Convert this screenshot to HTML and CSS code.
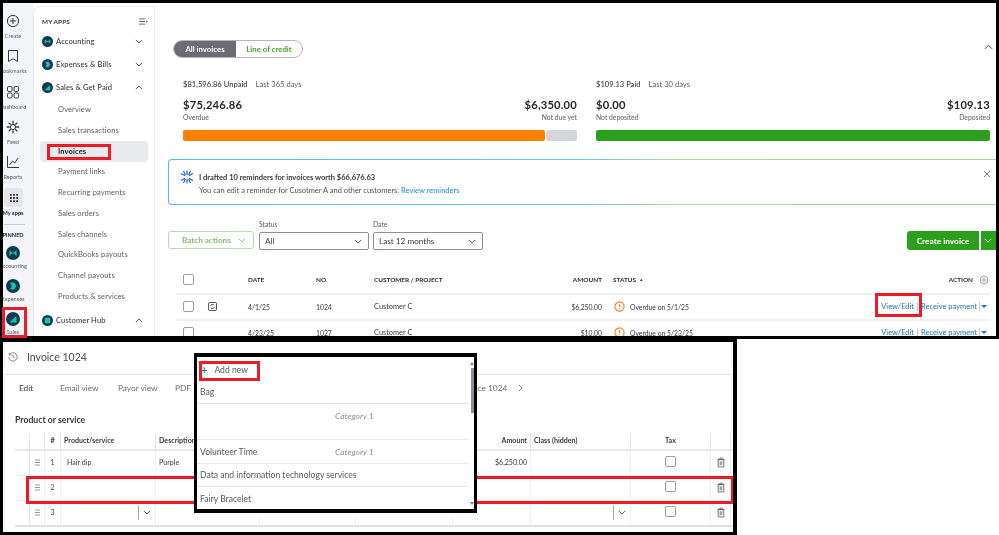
FILE: index.html
```html
<!DOCTYPE html>
<html lang="en">
<head>
<meta charset="utf-8">
<title>Invoices</title>
<link rel="stylesheet" href="styles.css">
</head>
<body>
<svg class="defs" width="0" height="0" aria-hidden="true">
  <symbol id="chev-down" viewBox="0 0 10 6"><path d="M1 1l4 4 4-4" fill="none" stroke="currentColor" stroke-width="1.1"/></symbol>
  <symbol id="chev-up" viewBox="0 0 10 6"><path d="M1 5l4-4 4 4" fill="none" stroke="currentColor" stroke-width="1.1"/></symbol>
  <symbol id="trash" viewBox="0 0 10 13"><path d="M1.5 3h7v9h-7zM.5 2.6h9M3.5 2.4V1h3v1.4M4 5v5M6 5v5" fill="none" stroke="#55585e" stroke-width="1"/></symbol>
  <symbol id="grip" viewBox="0 0 6 8"><path d="M0 1h6M0 4h6M0 7h6" stroke="#8d9096" stroke-width="1.1"/></symbol>
  <symbol id="alert" viewBox="0 0 12 12"><circle cx="6" cy="6" r="5" fill="#fff" stroke="#f58220" stroke-width="1.2"/><path d="M6 3v3.6M6 8v1" stroke="#f58220" stroke-width="1.2"/></symbol>
</svg>
<div class="page">

<section class="shot shot-top">
  <aside class="rail">
    <div class="rail-group">
      <div class="rail-item"><svg class="rail-icon" viewBox="0 0 14 14"><circle cx="7" cy="7" r="5.6" fill="none" stroke="#393a3d"/><path d="M7 4v6M4 7h6" stroke="#393a3d"/></svg><span>Create</span></div>
      <div class="rail-item"><svg class="rail-icon" viewBox="0 0 14 14"><path d="M2.5 1.500h9v11L7 9.600l-4.500 2.900z" fill="none" stroke="#393a3d"/></svg><span>Bookmarks</span></div>
      <div class="rail-item"><svg class="rail-icon" viewBox="0 0 14 14"><rect x="1.5" y="1.5" width="4.6" height="5" rx="1.3" fill="none" stroke="#393a3d"/><rect x="8" y="1.5" width="4.6" height="5" rx="1.3" fill="none" stroke="#393a3d"/><rect x="1.5" y="8" width="4.6" height="5" rx="1.3" fill="none" stroke="#393a3d"/><rect x="8" y="8" width="4.6" height="5" rx="1.3" fill="none" stroke="#393a3d"/></svg><span>Dashboard</span></div>
      <div class="rail-item"><svg class="rail-icon" viewBox="0 0 14 14"><circle cx="7" cy="7" r="2.6" fill="none" stroke="#393a3d"/><path d="M7 .8v3M7 10.200v3M.8 7h3M10.200 7h3M2.600 2.600l2.200 2.200M9.200 9.200l2.200 2.200M11.400 2.600L9.200 4.800M4.800 9.200l-2.200 2.200" stroke="#393a3d" stroke-width="1.3"/></svg><span>Feed</span></div>
      <div class="rail-item"><svg class="rail-icon" viewBox="0 0 14 14"><path d="M1.500 1v11.500H13" fill="none" stroke="#393a3d"/><path d="M3.500 10l3-4 2.200 2L12 3" fill="none" stroke="#393a3d"/></svg><span>Reports</span></div>
    </div>
    <div class="rail-apps">
      <div class="apps-box"><svg class="apps-dots" viewBox="0 0 10 10"><path d="M1 1h1.800v1.800H1zM4.100 1h1.800v1.800H4.100zM7.200 1H9v1.800H7.200zM1 4.100h1.800v1.800H1zM4.100 4.100h1.800v1.800H4.100zM7.200 4.100H9v1.800H7.200zM1 7.200h1.800V9H1zM4.100 7.200h1.800V9H4.100zM7.200 7.200H9V9H7.200z" fill="#2f3033"/></svg></div>
      <span class="strong-label">My apps</span>
    </div>
    <div class="rail-rule"></div>
    <span class="strong-label pinned">PINNED</span>
    <div class="rail-pins">
      <div class="rail-item"><svg class="rail-icon" viewBox="0 0 12 12"><circle cx="6" cy="6" r="6" fill="#0d3a55"/><path d="M3 3.500l2 2h2l2-2v5l-2-2H5l-2 2z" fill="#18c9a0"/></svg><span>Accounting</span></div>
      <div class="rail-item"><svg class="rail-icon" viewBox="0 0 12 12"><circle cx="6" cy="6" r="6" fill="#0d3a55"/><path d="M3.500 3H7l2 3-2 3H3.500l1.500-3z" fill="#18c9a0"/></svg><span>Expenses</span></div>
      <div class="rail-item"><svg class="rail-icon" viewBox="0 0 12 12"><circle cx="6" cy="6" r="6" fill="#0d3a55"/><path d="M3 9l5-5 1 0v5z" fill="#18c9a0"/></svg><span>Sales</span></div>
    </div>
  </aside>

  <nav class="nav">
    <div class="nav-head"><span>MY APPS</span><svg class="nav-collapse" viewBox="0 0 10 8"><path d="M0 1h7M0 4h7M0 7h7" stroke="#55585e"/><path d="M8 2.500L10 4 8 5.500z" fill="#55585e"/></svg></div>
    <div class="app-row"><svg class="app-icon" viewBox="0 0 12 12"><circle cx="6" cy="6" r="6" fill="#0d3a55"/><path d="M3 3.500l2 2h2l2-2v5l-2-2H5l-2 2z" fill="#18c9a0"/></svg><span class="app-name">Accounting</span><svg class="chev" viewBox="0 0 10 6"><use href="#chev-down"/></svg></div>
    <div class="app-row"><svg class="app-icon" viewBox="0 0 12 12"><circle cx="6" cy="6" r="6" fill="#0d3a55"/><path d="M3.500 3H7l2 3-2 3H3.500l1.500-3z" fill="#18c9a0"/></svg><span class="app-name">Expenses &amp; Bills</span><svg class="chev" viewBox="0 0 10 6"><use href="#chev-down"/></svg></div>
    <div class="app-row app-row-open"><svg class="app-icon" viewBox="0 0 12 12"><circle cx="6" cy="6" r="6" fill="#0d3a55"/><path d="M3 9l5-5 1 0v5z" fill="#18c9a0"/></svg><span class="app-name">Sales &amp; Get Paid</span><svg class="chev" viewBox="0 0 10 6"><use href="#chev-up"/></svg></div>
    <a class="sub-item">Overview</a>
    <a class="sub-item">Sales transactions</a>
    <a class="sub-item is-active">Invoices</a>
    <a class="sub-item">Payment links</a>
    <a class="sub-item">Recurring payments</a>
    <a class="sub-item">Sales orders</a>
    <a class="sub-item">Sales channels</a>
    <a class="sub-item">QuickBooks payouts</a>
    <a class="sub-item">Channel payouts</a>
    <a class="sub-item">Products &amp; services</a>
    <div class="app-row app-row-hub"><svg class="app-icon" viewBox="0 0 12 12"><circle cx="6" cy="6" r="6" fill="#0d3a55"/><rect x="3" y="3" width="6" height="6" rx="1" fill="#18c9a0"/></svg><span class="app-name">Customer Hub</span><svg class="chev" viewBox="0 0 10 6"><use href="#chev-up"/></svg></div>
  </nav>

  <main class="main">
    <div class="tabs-row">
      <div class="seg"><span class="seg-on">All invoices</span><span class="seg-off">Line of credit</span></div>
      <svg class="collapse-up" viewBox="0 0 10 6"><use href="#chev-up"/></svg>
    </div>
    <div class="stats">
      <div class="stat">
        <div class="stat-head"><span>$81,596.86 Unpaid</span><span class="stat-range">Last 365 days</span></div>
        <div class="stat-line"><b>$75,246.86</b><b>$6,350.00</b></div>
        <div class="stat-cap"><span>Overdue</span><span>Not due yet</span></div>
        <div class="bar"><i class="bar-orange"></i><i class="bar-grey"></i></div>
      </div>
      <div class="stat">
        <div class="stat-head"><span>$109.13 Paid</span><span class="stat-range">Last 30 days</span></div>
        <div class="stat-line"><b>$0.00</b><b>$109.13</b></div>
        <div class="stat-cap"><span>Not deposited</span><span>Deposited</span></div>
        <div class="bar"><i class="bar-green"></i></div>
      </div>
    </div>
    <div class="banner">
      <svg class="banner-icon" viewBox="0 0 14 14"><path d="M7 .5v4.500M7 9v4.500M1 3.500l4 2.300M9 8.200l4 2.300M13 3.500L9 5.800M5 8.200l-4 2.300M3.500 1L5.500 5M8.500 9l2 4M10.500 1l-2 4M5.500 9l-2 4" stroke="#1e64e0" stroke-width="1.200" fill="none"/></svg>
      <div class="banner-text">
        <b>I drafted 10 reminders for invoices worth $66,676.63</b>
        <p>You can edit a reminder for Cusotmer A and other customers. <a>Review reminders</a></p>
      </div>
      <svg class="banner-x" viewBox="0 0 8 8"><path d="M1 1l6 6M7 1L1 7" stroke="#7d8086"/></svg>
    </div>
    <div class="filters">
      <button class="batch">Batch actions<svg class="chev-sm" viewBox="0 0 10 6"><use href="#chev-down"/></svg></button>
      <label class="field"><span>Status</span><div class="select"><span>All</span><svg class="chev-sm" viewBox="0 0 10 6"><use href="#chev-down"/></svg></div></label>
      <label class="field"><span>Date</span><div class="select"><span>Last 12 months</span><svg class="chev-sm" viewBox="0 0 10 6"><use href="#chev-down"/></svg></div></label>
      <div class="create"><button class="create-main">Create invoice</button><button class="create-split"><svg class="chev-sm" viewBox="0 0 10 6"><use href="#chev-down"/></svg></button></div>
    </div>
    <div class="inv-table">
      <div class="inv-row inv-head">
        <span class="box"></span><span></span><span>DATE</span><span>NO.</span><span>CUSTOMER / PROJECT</span><span class="right">AMOUNT</span><span class="inv-status">STATUS <small>▲</small></span>
        <span class="inv-action">ACTION<svg class="gear" viewBox="0 0 12 12"><path d="M6 1l4.300 2.500v5L6 11 1.700 8.500v-5z" fill="none" stroke="#85888e"/><circle cx="6" cy="6" r="1.700" fill="none" stroke="#85888e"/></svg></span>
      </div>
      <div class="inv-row">
        <span class="box"></span><svg class="sync" viewBox="0 0 10 10"><rect x=".5" y=".5" width="9" height="9" rx="1.500" fill="none" stroke="#393a3d"/><path d="M2.800 4.500a2.300 2.300 0 0 1 4-1M7.200 5.500a2.300 2.300 0 0 1-4 1" fill="none" stroke="#393a3d" stroke-width=".9"/></svg><span>4/1/25</span><span>1024</span><span class="inv-cust">Customer C</span><span class="right">$6,250.00</span>
        <span class="inv-status"><svg class="alert"><use href="#alert"/></svg>Overdue on 5/1/25</span>
        <span class="inv-links"><a>View/Edit</a><a class="linked">Receive payment</a><i class="caret"></i></span>
      </div>
      <div class="inv-row">
        <span class="box"></span><span></span><span>4/23/25</span><span>1027</span><span class="inv-cust">Customer C</span><span class="right">$10.00</span>
        <span class="inv-status"><svg class="alert"><use href="#alert"/></svg>Overdue on 5/23/25</span>
        <span class="inv-links"><a>View/Edit</a><a class="linked">Receive payment</a><i class="caret"></i></span>
      </div>
    </div>
  </main>
  <div class="mark mark-invoices"></div>
  <div class="mark mark-view"></div>
</section>
<div class="mark mark-sales"></div>

<section class="shot shot-bottom">
  <header class="inv-title">
    <svg class="history" viewBox="0 0 12 12"><path d="M1.800 3.200A5 5 0 1 1 1 6M1.500 1v2.500H4M6 3.200V6l2 1.200" fill="none" stroke="#6b6c72"/></svg>
    <span>Invoice 1024</span>
  </header>
  <div class="inv-tabs">
    <span class="tab-edit">Edit</span><span class="tab-email">Email view</span><span class="tab-payor">Payor view</span><span class="tab-pdf">PDF<svg class="tab-pdf-chev" viewBox="0 0 10 6"><use href="#chev-down"/></svg></span><span class="tab-doc">Invoice 1024</span>
    <svg class="tab-next" viewBox="0 0 6 10"><path d="M1 1l4 4-4 4" fill="none" stroke="#6b6c72" stroke-width="1.100"/></svg>
  </div>
  <h2 class="ps-title">Product or service</h2>
  <div class="ps-table">
    <div class="ps-row ps-head">
      <span></span><span></span><span class="center">#</span><span>Product/service</span><span>Description</span><span></span><span></span><span class="right">Amount</span><span>Class (hidden)</span><span class="center">Tax</span><span></span>
    </div>
    <div class="ps-row">
      <span></span><span class="center"><svg class="grip"><use href="#grip"/></svg></span><span class="center">1</span><span class="ps-indent">Hair dip</span><span>Purple</span><span></span><span></span><span class="right">$6,250.00</span><span></span><span class="center"><i class="box"></i></span><span class="center"><svg class="trash"><use href="#trash"/></svg></span>
    </div>
    <div class="ps-row">
      <span></span><span class="center"><svg class="grip"><use href="#grip"/></svg></span><span class="center">2</span><span></span><span></span><span></span><span></span><span></span><span></span><span class="center"><i class="box"></i></span><span class="center"><svg class="trash"><use href="#trash"/></svg></span>
    </div>
    <div class="ps-row ps-last">
      <span></span><span class="center"><svg class="grip"><use href="#grip"/></svg></span><span class="center">3</span><span class="ps-pick"><svg class="chev-pick" viewBox="0 0 10 6"><use href="#chev-down"/></svg></span><span></span><span></span><span></span><span></span><span class="ps-pick"><svg class="chev-pick" viewBox="0 0 10 6"><use href="#chev-down"/></svg></span><span class="center"><i class="box"></i></span><span class="center"><svg class="trash"><use href="#trash"/></svg></span>
    </div>
  </div>
  <div class="mark mark-line"></div>
</section>

<aside class="popup">
  <div class="popup-list">
    <div class="pop-add"><span class="plus">+</span><span>Add new</span></div>
    <div class="pop-item pop-bag">Bag</div>
    <div class="pop-item pop-cat"><em>Category 1</em></div>
    <div class="pop-item pop-vol"><span class="pop-name">Volunteer Time</span><em>Category 1</em></div>
    <div class="pop-item pop-data">Data and information technology services</div>
    <div class="pop-item pop-last">Fairy Bracelet</div>
  </div>
  <div class="scroll"><i class="arrow-up"></i><i class="thumb"></i><i class="arrow-down"></i></div>
  <div class="mark mark-add"></div>
</aside>

</div>
</body>
</html>
```

FILE: styles.css
```css
* { box-sizing: border-box; }
html, body { margin: 0; padding: 0; background: #fff; }
body { width: 999px; height: 535px; overflow: hidden; font-family: Lato, "Noto Sans", sans-serif; color: #393a3d; font-size: 7.5px; }
.defs { position: absolute; }
.page { position: relative; width: 999px; height: 535px; filter: blur(.45px); }
svg { display: block; flex: none; }
b { font-weight: 700; }

.shot { position: absolute; border: 3px solid #000; background: #fff; overflow: hidden; }
.shot-top { left: 0; top: 0; width: 999px; height: 339px; display: flex; }
.shot-bottom { left: 0; top: 339px; width: 737px; height: 196px; border-width: 3px 4px 3px 3px; }

.mark { position: absolute; border: 3px solid #ed1c24; pointer-events: none; }
.mark-sales { left: 2px; top: 307px; width: 25px; height: 31px; }
.mark-invoices { left: 44px; top: 141px; width: 64px; height: 16px; }
.mark-view { left: 872px; top: 290px; width: 47px; height: 24px; }
.mark-line { left: 23px; top: 134px; width: 708px; height: 28px; }
.mark-add { left: 2px; top: 4px; width: 61px; height: 20px; }

/* rail */
.rail { width: 30px; flex: none; background: #f4f5f8; padding: 11px 0 0 0; display: flex; flex-direction: column; color: #5b5e64; font-size: 5.6px; }
.rail-group, .rail-pins { width: 20px; display: flex; flex-direction: column; align-items: center; gap: 11.25px; }
.rail-pins { gap: 9px; margin-top: 5.5px; }
.rail-item { display: flex; flex-direction: column; align-items: center; gap: 4px; height: 24px; line-height: 7.5px; white-space: nowrap; }
.rail-pins .rail-item { gap: 2.5px; }
.rail-icon { width: 14px; height: 14px; }
.rail-apps { width: 20px; margin-top: 9px; display: flex; flex-direction: column; align-items: center; line-height: 11px; }
.apps-box { width: 19px; height: 19px; border-radius: 3px; background: #e3e5e8; display: flex; align-items: center; justify-content: center; margin-left: 1px; }
.apps-dots { width: 10px; height: 10px; }
.strong-label { color: #25262a; font-weight: 700; font-size: 5.6px; white-space: nowrap; }
.rail-rule { width: 21px; height: 1px; background: #c9ccd1; margin: 6px 0 0 1px; }
.pinned { width: 20px; display: flex; justify-content: center; line-height: 10px; margin-top: 5px; }

/* nav */
.nav { width: 122px; flex: none; margin-top: 3px; padding-top: 8.3px; background: #fff; border: 1px solid #e6e8eb; border-bottom: 0; border-radius: 8px 0 0 0; color: #5b5e64; font-size: 7.55px; letter-spacing: .1px; }
.nav-head { display: flex; justify-content: space-between; align-items: center; height: 12px; padding: 0 6px 0 8px; color: #393a3d; font-size: 6.4px; font-weight: 700; margin-bottom: 2.5px; }
.nav-collapse { width: 9px; height: 7px; }
.app-row { display: flex; align-items: center; height: 23px; padding: 0 11px 0 8px; gap: 3px; }
.app-row-open { margin-bottom: .5px; }
.app-row-hub { margin-top: 2px; }
.app-icon { width: 11px; height: 11px; }
.app-name { flex: 1; color: #393a3d; font-weight: 500; }
.chev { width: 8px; height: 5px; color: #393a3d; }
.sub-item { display: flex; align-items: center; height: 20.75px; margin: 0 6px; padding-left: 18px; border-radius: 4px; }
.is-active { background: #e9eaed; color: #26272a; font-weight: 700; }

/* main */
.main { flex: 1; min-width: 0; padding-top: 37px; }
.tabs-row { display: flex; justify-content: space-between; align-items: flex-start; margin: 0 3px 0 18px; }
.seg { display: flex; height: 18px; border: 1px solid #b5b7bc; border-radius: 9px; overflow: hidden; font-size: 7.8px; font-weight: 700; }
.seg-on { width: 62px; background: #6b6c72; color: #fff; display: flex; align-items: center; justify-content: center; }
.seg-off { width: 66px; color: #4aa32f; display: flex; align-items: center; justify-content: center; }
.collapse-up { width: 9px; height: 6px; color: #393a3d; margin-top: 4px; }

.stats { display: grid; grid-template-columns: 394px 394px; column-gap: 19px; margin: 20px 0 0 28px; }
.stat-head { display: flex; gap: 8px; height: 12px; line-height: 12px; font-size: 7.6px; font-weight: 500; }
.stat-range { color: #5b5e64; font-weight: 400; }
.stat-line { display: flex; justify-content: space-between; margin-top: 8px; height: 14px; line-height: 14px; font-size: 11.2px; letter-spacing: .2px; color: #26272a; }
.stat-cap { display: flex; justify-content: space-between; height: 10px; line-height: 10px; color: #5b5e64; font-size: 6.8px; }
.bar { display: flex; gap: 1px; height: 11px; margin-top: 8px; }
.bar i { display: block; height: 100%; border-radius: 2px; }
.bar-orange { width: 362px; background: #ff8000; }
.bar-grey { flex: 1; background: #d4d6da; }
.bar-green { width: 100%; background: #2ca01c; }

.banner { display: flex; align-items: flex-start; height: 46px; margin: 18px -8px 0 13px; padding: 10px 12px 0 11px; border: 1px solid transparent; border-radius: 4px; background: linear-gradient(#fff, #fff) padding-box, linear-gradient(90deg, #59b9ee, #6fc3e6 50%, #a6dd92 60%, #a0d98d) border-box; }
.banner-icon { width: 14px; height: 14px; margin-right: 5px; }
.banner-text { flex: 1; font-size: 7.5px; line-height: 13px; padding-top: 1px; }
.banner-text p { margin: 0; color: #4d5056; }
.banner-text a { color: #1a8cd8; }
.banner-x { width: 8px; height: 8px; }

.filters { display: flex; align-items: flex-end; height: 32px; margin: 13px 0 0 13px; gap: 5px; }
.batch { display: flex; align-items: center; justify-content: space-between; width: 86px; height: 18px; margin-bottom: 1px; padding: 0 7px 0 13px; border: 1px solid #b2dfa9; border-radius: 3px; background: #fff; color: #7fc073; font: 700 8.1px Lato, sans-serif; }
.chev-sm { width: 8px; height: 5px; }
.field { display: flex; flex-direction: column; gap: 2px; color: #5b5e64; font-size: 6.8px; line-height: 12px; margin-right: -1px; }
.select { display: flex; align-items: center; justify-content: space-between; width: 110px; height: 18px; padding: 0 6px 0 5px; border: 1px solid #8d9096; border-radius: 2px; color: #393a3d; font-size: 8.2px; }
.create { display: flex; gap: 2px; margin-left: auto; margin-bottom: 0; }
.create button { height: 19px; border: 0; background: #2ca01c; color: #fff; font: 700 8.3px Lato, sans-serif; }
.create-main { width: 72px; border-radius: 3px 0 0 3px; }
.create-split { width: 15px; padding: 0 0 0 3px; }
.create-split svg { color: #fff; }

.inv-table { margin: 17px 6px 0 21px; font-size: 6.8px; }
.inv-row { display: grid; grid-template-columns: 7px 25px 40px 68px 58px 150px 78px 1fr auto; align-items: center; height: 26px; border-bottom: 2px solid #eef0f2; }
.inv-row::before { content: ""; }
.inv-head { height: 27.5px; font-weight: 700; color: #2d2e31; font-size: 6.4px; }
.inv-cust { font-size: 7.4px; }
.box { display: block; width: 11px; height: 11px; border: 1px solid #9a9da3; border-radius: 2px; background: #fff; }
.sync { width: 9px; height: 9px; }
.right { text-align: right; }
.inv-status { display: flex; align-items: center; gap: 5px; padding-left: 11px; white-space: nowrap; }
.inv-status small { font-size: 4.5px; margin-left: -2px; }
.inv-action { display: flex; align-items: center; gap: 6px; }
.gear { width: 10px; height: 10px; margin-right: 1px; }
.alert { width: 11px; height: 11px; margin-left: 1px; }
.inv-links { display: flex; align-items: center; color: #1a72b8; font-size: 7.5px; padding-right: 3px; }
.linked { border-left: 1px solid #c6c9ce; margin-left: 3px; padding: 0 2px 0 3px; border-right: 1px solid #c6c9ce; }
.caret { width: 0; height: 0; margin-left: 1px; border: 3px solid transparent; border-top: 3px solid #1a72b8; border-bottom: 0; }

/* lower */
.inv-title { display: flex; align-items: center; gap: 9px; height: 33px; padding: 0 0 3px 5px; border-bottom: 1px solid #e3e5e8; font-size: 10.5px; color: #4a4c51; }
.history { width: 10px; height: 10px; }
.inv-tabs { display: flex; align-items: center; height: 26px; padding-left: 16px; font-size: 8.3px; color: #6b6d73; white-space: nowrap; }
.tab-edit { width: 41px; color: #393a3d; }
.tab-email { width: 58px; }
.tab-payor { width: 57px; }
.tab-pdf { width: 285px; display: flex; align-items: center; gap: 4px; }
.tab-pdf-chev { width: 7px; height: 5px; }
.tab-doc { width: 49px; margin-right: 9px; }
.tab-next { width: 5px; height: 8px; }
.ps-title { margin: 13px 0 0 12px; height: 12px; line-height: 12px; font-size: 8.7px; font-weight: 700; color: #393a3d; }
.ps-table { margin: 6px -6px 0 12px; font-size: 7.1px; }
.ps-row { display: grid; grid-template-columns: 15px 15px 16px 95px 104px 96px 97px 78px 100px 80px 20px; height: 25.200px; border-bottom: 1px solid #eceef1; }
.ps-last { height: 26.2px; border-bottom: 2px solid #dfe1e5; }
.ps-row > span { display: flex; align-items: center; border-right: 1px solid #eef0f2; min-width: 0; padding: 0 2px 0 3px; }
.ps-row > span:first-child { border-right-color: #e3e5e8; }
.ps-head { height: 18.5px; padding-top: 1px; border-bottom: 2px solid #e6e8eb; font-weight: 700; color: #393a3d; }
.ps-head > span { border-right-color: #dfe1e5; white-space: nowrap; }
.ps-row > .center { justify-content: center; padding: 0; }
.ps-row > .right { justify-content: flex-end; padding-right: 3px; }
.ps-row > .ps-indent { padding-left: 6px; }
.ps-row > .ps-pick { justify-content: flex-end; padding-right: 3px; }
.chev-pick { width: 8px; height: 5px; color: #393a3d; box-sizing: content-box; padding: 5px 0 5px 4px; border-left: 1px solid #a9acb1; margin-right: 1px; }
.grip { width: 5px; height: 7px; }
.trash { width: 8px; height: 11px; }
.ps-row .box { width: 11px; height: 11px; margin-top: -3px; }

/* popup */
.popup { position: absolute; left: 194px; top: 353px; width: 283px; height: 160px; display: flex; border: solid #000; border-width: 4px 3px; background: #fff; }
.popup-list { width: 271px; font-size: 8.6px; color: #55585e; }
.pop-add { display: flex; align-items: center; gap: 7px; height: 25px; padding-left: 4px; }
.plus { color: #1a72b8; font-size: 11px; font-weight: 700; line-height: 1; }
.pop-item { display: flex; align-items: center; padding-left: 3px; border-bottom: 1px solid #e4e6e9; }
.pop-item em { color: #8d9096; font-size: 8.5px; }
.pop-bag { height: 22px; padding-bottom: 1px; }
.pop-cat { height: 36px; padding: 0 0 12px 138px; }
.pop-vol { height: 24px; }
.pop-name { width: 135px; }
.pop-data { height: 23px; }
.pop-last { height: 23px; border-bottom: 0; }
.scroll { flex: 1; display: flex; flex-direction: column; align-items: flex-end; padding: 5px 0 4px; }
.thumb { display: block; width: 3px; height: 45px; margin: 3px 0 auto; background: #8f9196; }
.arrow-up, .arrow-down { width: 0; height: 0; border: 2px solid transparent; }
.arrow-up { border-bottom: 3px solid #7d8086; border-top: 0; }
.arrow-down { border-top: 3px solid #7d8086; border-bottom: 0; }
```
